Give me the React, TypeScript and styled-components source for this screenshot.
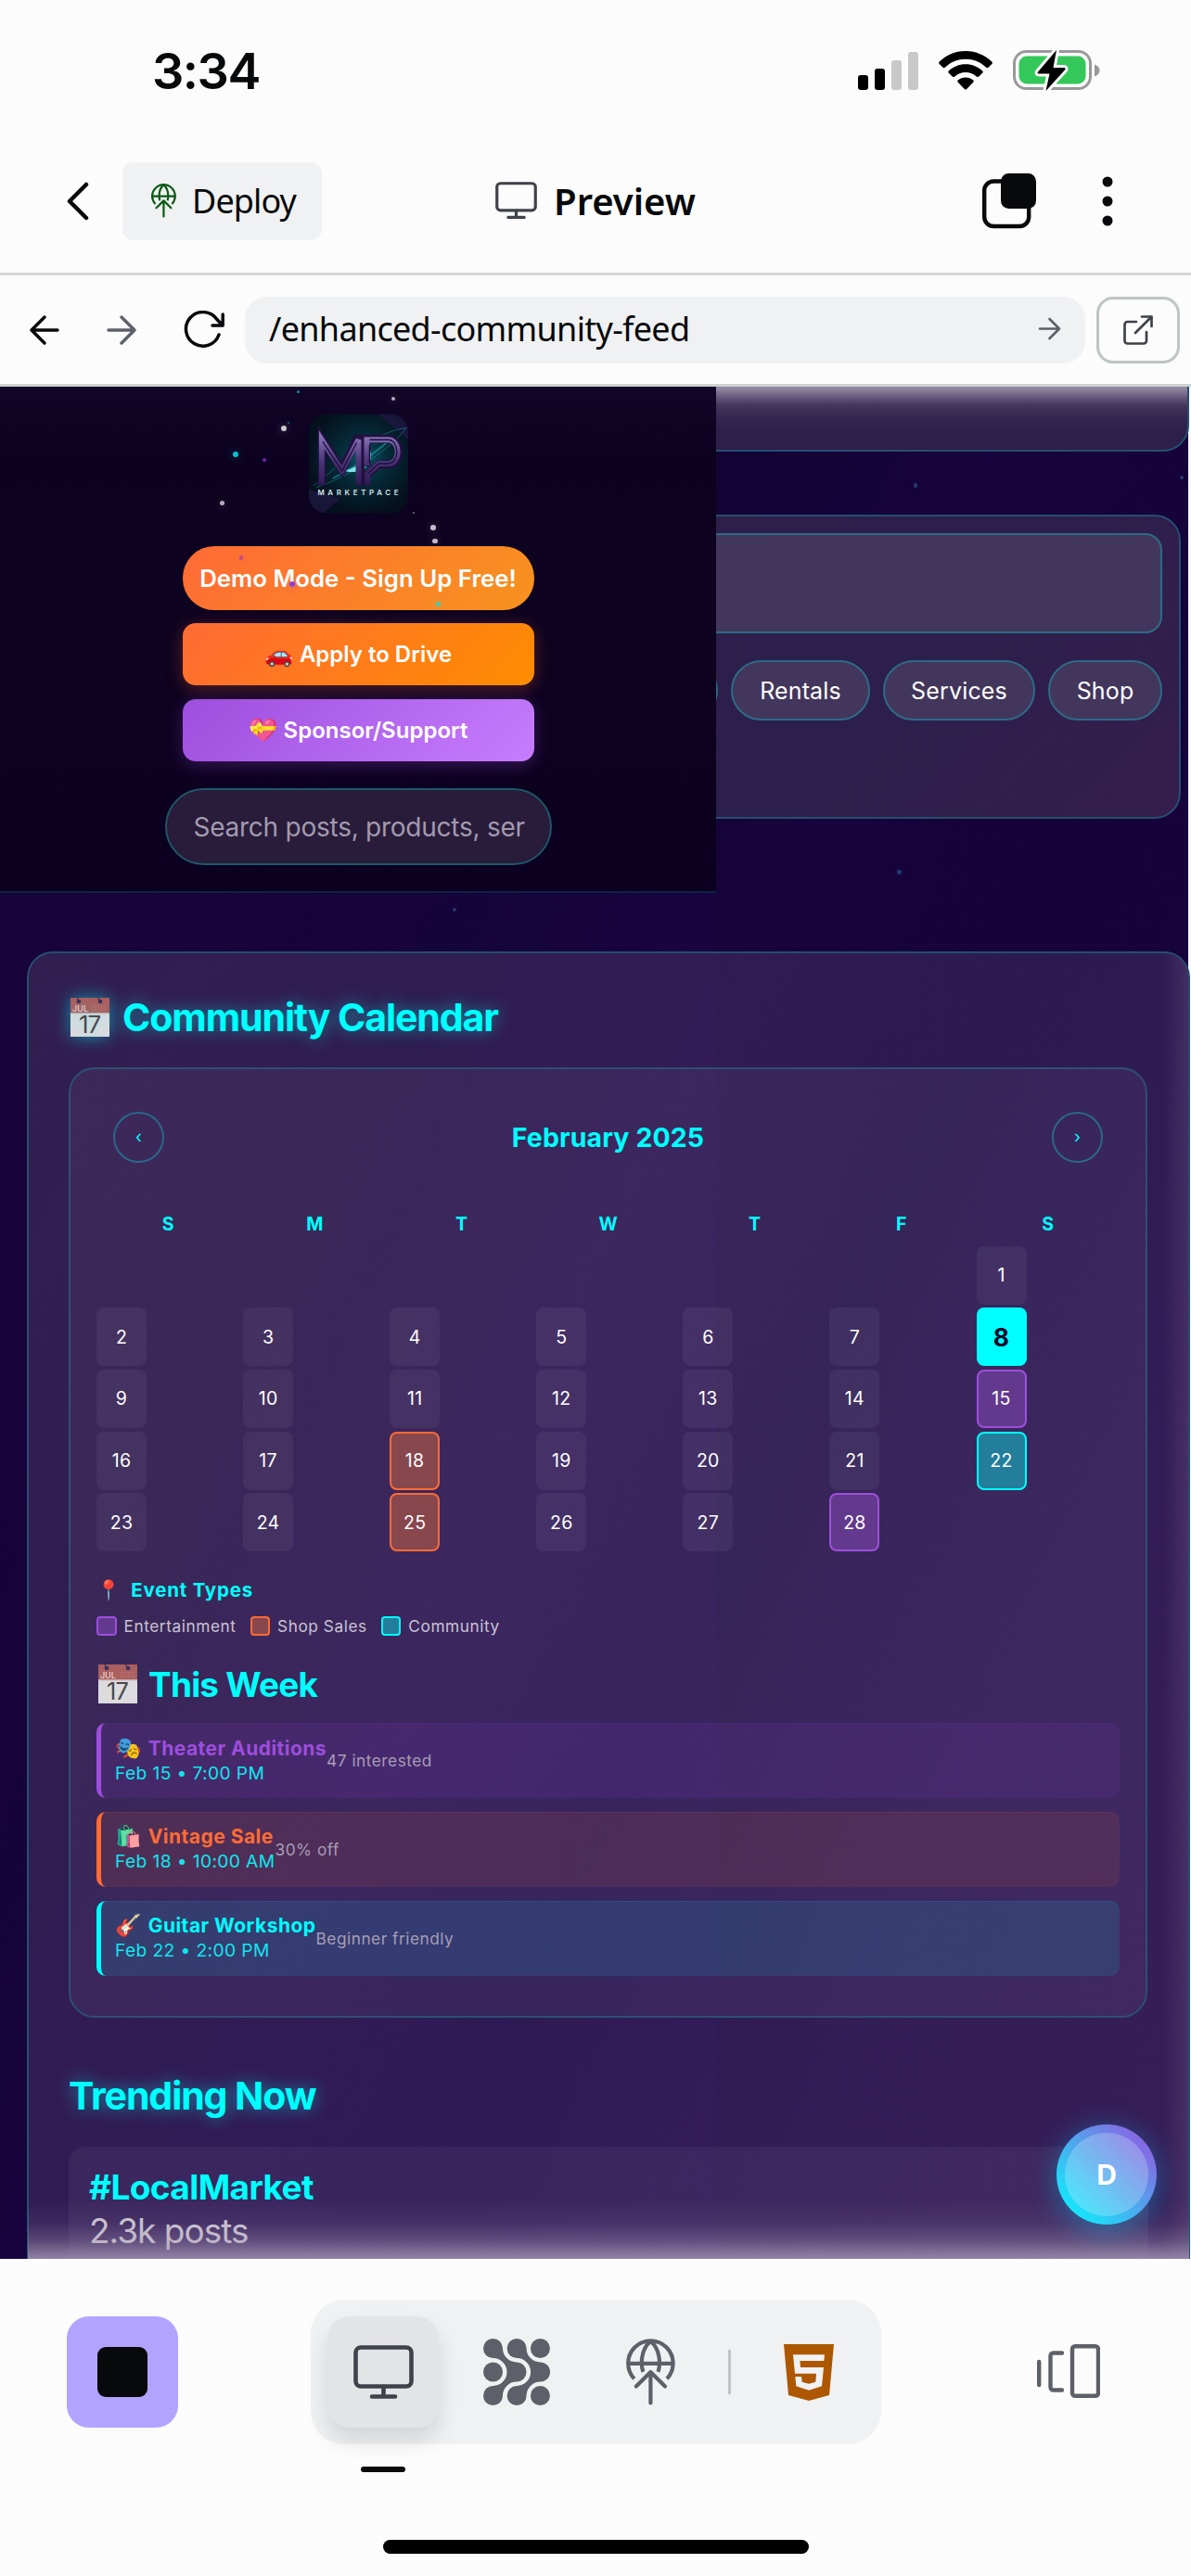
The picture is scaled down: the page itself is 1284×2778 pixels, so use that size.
import React from "react";
import styled, { createGlobalStyle, css } from "styled-components";

const Global = createGlobalStyle`
  *, *::before, *::after { box-sizing: border-box; }
  html, body { margin: 0; padding: 0; background: #fcfcfc; }
  body { font-family: Inter, "Liberation Sans", "Noto Color Emoji", sans-serif; }
`;

const Screen = styled.div`
  width: 1284px;
  height: 2778px;
  display: flex;
  flex-direction: column;
  background: #fcfcfc;
  color: #07090b;
  overflow: hidden;
`;

/* ---------- status bar ---------- */
const StatusBar = styled.header`
  height: 150px;
  flex: none;
  display: flex;
  justify-content: space-between;
  align-items: center;
  padding: 2px 98px 0 164px;
`;
const Clock = styled.span`
  font-size: 54px;
  font-weight: 600;
  letter-spacing: -1.5px;
`;
const StatusIcons = styled.div`
  display: flex;
  align-items: center;
  gap: 22px;
`;

/* ---------- app header ---------- */
const AppHeader = styled.div`
  height: 147px;
  flex: none;
  display: grid;
  grid-template-columns: 1fr auto 1fr;
  align-items: center;
  padding: 0 84px 11px 71px;
  border-bottom: 3px solid #d5d7d8;
`;
const HeaderSide = styled.div<{ $end?: boolean; $gap: number }>`
  display: flex;
  align-items: center;
  gap: ${(p) => p.$gap}px;
  justify-content: ${(p) => (p.$end ? "flex-end" : "flex-start")};
`;
const DeployButton = styled.button`
  width: 215px;
  height: 84px;
  border: 0;
  border-radius: 12px;
  background: #f0f1f3;
  color: #07090b;
  display: flex;
  align-items: center;
  gap: 17px;
  padding: 0 0 0 31px;
  font: 400 36px "Noto Sans", sans-serif;
  letter-spacing: -0.9px;
`;
const PageTitle = styled.div`
  display: flex;
  align-items: center;
  gap: 18px;
  margin-left: 13px;
  font: 600 40px "Noto Sans", sans-serif;
  letter-spacing: 0px;
`;

/* ---------- url bar ---------- */
const UrlRow = styled.div`
  height: 120px;
  flex: none;
  display: flex;
  align-items: center;
  padding: 0 12px 0 32px;
  border-bottom: 3px solid #cfd3d2;
`;
const NavIcons = styled.div`
  display: flex;
  align-items: center;
  width: 232px;
  gap: 51px;
`;
const UrlField = styled.div`
  flex: 1;
  height: 72px;
  border-radius: 24px;
  background: #f0f1f3;
  display: flex;
  align-items: center;
  justify-content: space-between;
  padding: 0 26px 2px 26px;
  font: 400 36px "Noto Sans", sans-serif;
  letter-spacing: -0.7px;
`;
const OpenButton = styled.button`
  width: 90px;
  height: 72px;
  margin-left: 12px;
  padding: 0;
  border: 3px solid #bfc4c4;
  border-radius: 18px;
  background: #fcfcfc;
  display: flex;
  align-items: center;
  justify-content: center;
`;

/* ---------- web view ---------- */
const WebView = styled.main`
  position: relative;
  height: 2019px;
  flex: none;
  overflow: hidden;
  background: #fcfcfc;
  color: #fff;
`;
const PageBody = styled.div`
  width: 1281px;
  height: 2019px;
  background:
    linear-gradient(90deg, rgba(34, 4, 84, 0.2) 0 772px, transparent 772px),
    linear-gradient(115deg, #130434 0%, #160334 22%, #120434 34%, #17043c 50%, #150339 62%, #1a0440 78%, #1b0443 100%);
`;
const Feed = styled.div`
  width: 1284px;
  padding-left: 29px;
  display: flex;
  flex-direction: column;
`;
const glass = css`
  background: linear-gradient(118deg, rgba(255, 255, 255, 0.11), rgba(255, 215, 255, 0.115) 30%, rgba(210, 190, 255, 0.12) 55%, rgba(255, 225, 245, 0.12));
  border: 2px solid #254e70;
`;
const ComposerTop = styled.section`
  ${glass}
  width: 1253px;
  height: 150px;
  margin-top: -80px;
  border-radius: 28px;
  background: linear-gradient(180deg, #8f87a0 80px, #6a5f80 88px, #43375c 98px, #33264f 112px, #2c1f4a 126px, #2c1f4a);
`;
const Composer = styled.section`
  ${glass}
  width: 1244px;
  height: 328px;
  margin-top: 68px;
  border-radius: 28px;
  padding: 18px;
  background: linear-gradient(135deg, #331f4c, #2d1f4a 40%, #2c1f4b 70%, #351e4c);
`;
const PostField = styled.div`
  height: 108px;
  border: 2px solid #2c6b86;
  border-radius: 18px;
  background: #43365c;
`;
const Filters = styled.div`
  display: flex;
  justify-content: flex-end;
  gap: 14px;
  margin-top: 29px;
`;
const Chip = styled.button<{ $w: number }>`
  width: ${(p) => p.$w}px;
  height: 65px;
  padding: 0;
  border: 2px solid #2c6b86;
  border-radius: 33px;
  background: #43365c;
  color: #fff;
  font: 400 25px Inter, sans-serif;
  letter-spacing: 0.15px;
`;
const Sidebar = styled.section`
  position: relative;
  ${glass}
  width: 1254px;
  height: 1480px;
  margin-top: 143px;
  border-radius: 28px;
  padding: 41px 43px 0;
  &::after {
    content: "";
    position: absolute;
    inset: 0;
    border-radius: 26px;
    pointer-events: none;
    background: linear-gradient(270deg, rgba(110, 90, 130, 0.3), rgba(110, 90, 130, 0) 27px);
  }
`;
const SectionTitle = styled.h2<{ $mt?: number }>`
  margin: ${(p) => p.$mt ?? 0}px 0 0;
  height: 58px;
  padding-bottom: 3px;
  font-size: 41px;
  font-weight: 700;
  letter-spacing: -1.08px;
  color: #00ffff;
  text-shadow: 0 0 18px rgba(0, 255, 255, 0.5);
  display: flex;
  align-items: center;
`;
const CalendarCard = styled.div`
  width: 1163px;
  height: 1025px;
  margin-top: 24px;
  padding: 46px 28px 0 28px;
  border: 2px solid #2d4f73;
  border-radius: 28px;
  background: rgba(255, 255, 255, 0.05);
`;
const MonthRow = styled.div`
  display: flex;
  align-items: center;
  justify-content: space-between;
  padding: 0 18px;
`;
const RoundButton = styled.button`
  width: 55px;
  height: 55px;
  padding: 0 0 2px;
  border: 2px solid #2b678a;
  border-radius: 50%;
  background: transparent;
  color: #00ffff;
  font: 400 18px Inter, sans-serif;
`;
const Month = styled.div`
  color: #00ffff;
  font-size: 28.5px;
  font-weight: 700;
  letter-spacing: 0.1px;
`;
const Grid = styled.div<{ $mt: number }>`
  display: grid;
  grid-template-columns: repeat(7, 1fr);
  gap: 3.6px;
  width: 1103px;
  margin-top: ${(p) => p.$mt}px;
`;
const Weekday = styled.div`
  text-align: center;
  height: 26px;
  line-height: 25px;
  color: #00ffff;
  font-size: 19.5px;
  font-weight: 700;
`;
type Kind = "plain" | "today" | "fun" | "sale" | "local";
const kinds = {
  plain: css`background: rgba(255, 255, 255, 0.05);`,
  today: css`background: #00ffff; color: #140a2c; font-weight: 700; font-size: 26.5px;`,
  fun: css`background: #63398e; border: 2px solid #9d4edd;`,
  sale: css`background: #88464d; border: 2px solid #ff6b35;`,
  local: css`background: #237e9c; border: 2px solid #00ffff;`,
};
const Day = styled.div<{ $kind: Kind }>`
  width: 54px;
  height: 63.1px;
  border-radius: 8px;
  display: flex;
  align-items: center;
  justify-content: center;
  font-size: 19.5px;
  letter-spacing: 0.3px;
  ${(p) => kinds[p.$kind]}
`;
const LegendTitle = styled.h4`
  margin: 27px 0 0;
  height: 28px;
  display: flex;
  align-items: center;
  color: #00ffff;
  font-size: 20.5px;
  font-weight: 700;
  letter-spacing: 0.8px;
`;
const Legend = styled.div`
  display: flex;
  margin-top: 14px;
  gap: 15px;
  height: 22px;
`;
const LegendItem = styled.div`
  display: flex;
  align-items: center;
  gap: 8px;
  color: #c9c3d3;
  font-size: 17.3px;
  letter-spacing: 0.55px;
`;
const Swatch = styled.span<{ $kind: Kind }>`
  ${(p) => kinds[p.$kind]}
  width: 21.5px;
  height: 21.5px;
  border-radius: 4px;
`;
const WeekTitle = styled.h3`
  margin: 28px 0 0;
  height: 48px;
  display: flex;
  align-items: center;
  color: #00ffff;
  font-size: 37px;
  font-weight: 700;
  letter-spacing: -0.8px;
`;
const EventRow = styled.div<{ $line: string; $bg: string }>`
  display: flex;
  align-items: center;
  width: 1103px;
  height: 81px;
  margin-bottom: 14.6px;
  padding: 0 0 0 15px;
  border-left: 5.4px solid ${(p) => p.$line};
  border-radius: 10px;
  background: ${(p) => p.$bg};
  box-shadow: inset 0 1px 0 ${(p) => p.$bg};
`;
const Events = styled.div`
  margin-top: 18px;
`;
const EventName = styled.div<{ $c: string }>`
  display: flex;
  align-items: center;
  height: 27px;
  color: ${(p) => p.$c};
  font-size: 21px;
  font-weight: 700;
  letter-spacing: 0.48px;
`;
const EventTime = styled.div`
  height: 27px;
  line-height: 27px;
  color: #0ee6ee;
  font-size: 19.3px;
  letter-spacing: 0.35px;
`;
const EventNote = styled.div`
  color: #a79db5;
  font-size: 17.3px;
  letter-spacing: 0.5px;
`;
const Trend = styled.div`
  width: 1164px;
  height: 160px;
  margin-top: 25px;
  padding: 21px 22px;
  border-radius: 18px;
  background: rgba(255, 255, 255, 0.05);
`;
const TrendTag = styled.div`
  height: 47px;
  line-height: 46px;
  color: #00ffff;
  font-size: 37px;
  font-weight: 700;
  letter-spacing: -0.6px;
`;
const TrendCount = styled.div`
  height: 46px;
  line-height: 46px;
  color: #cbc4d1;
  font-size: 37px;
  letter-spacing: -1px;
`;
const BottomHaze = styled.div`
  position: absolute;
  left: 30px;
  right: 2px;
  bottom: 0;
  height: 64px;
  background: linear-gradient(180deg, rgba(170, 155, 185, 0), rgba(170, 155, 185, 0.1) 40%, rgba(170, 155, 185, 0.35) 70%, rgba(170, 155, 185, 0.8));
`;

/* ---------- overlay menu ---------- */
const Menu = styled.nav`
  position: absolute;
  left: 0;
  top: 0;
  width: 772px;
  height: 546px;
  padding: 29px 0 0;
  display: flex;
  flex-direction: column;
  align-items: center;
  background: linear-gradient(180deg, #120528 0, #0c0220 14%, #0e0320 50%, #0c0020 100%);
  border-bottom: 2px solid #0d2446;
`;
const LogoBox = styled.div`
  height: 108px;
  margin-bottom: 35px;
`;
const Cta = styled.button<{ $bg: string; $pill?: boolean; $glow: string }>`
  width: 379px;
  height: ${(p) => (p.$pill ? 69 : 67)}px;
  margin-bottom: 14.4px;
  padding: 0;
  border: 0;
  border-radius: ${(p) => (p.$pill ? 34 : 14)}px;
  background: ${(p) => p.$bg};
  box-shadow: 0 4px 18px ${(p) => p.$glow};
  color: #fff;
  display: flex;
  align-items: center;
  justify-content: center;
  white-space: nowrap;
  font: 600 ${(p) => (p.$pill ? 25.8 : 24)}px Inter, sans-serif;
`;
const Search = styled.div`
  width: 417px;
  height: 83px;
  margin-top: 15px;
  padding: 0 29px;
  border: 2px solid #1c5868;
  border-radius: 42px;
  background: #281c3a;
  display: flex;
  align-items: center;
`;
const SearchText = styled.span`
  white-space: nowrap;
  color: #a29aae;
  font-size: 28px;
  letter-spacing: -0.25px;
`;
const Star = styled.i<{ $x: number; $y: number; $r: number; $c: string }>`
  position: absolute;
  left: ${(p) => p.$x - p.$r}px;
  top: ${(p) => p.$y - 417 - p.$r}px;
  width: ${(p) => p.$r * 2}px;
  height: ${(p) => p.$r * 2}px;
  border-radius: 50%;
  background: ${(p) => p.$c};
  box-shadow: 0 0 8px ${(p) => p.$c}66;
`;
const Fab = styled.button`
  position: absolute;
  left: 1139px;
  top: 1874px;
  width: 108px;
  height: 108px;
  padding: 9px;
  border: 0;
  border-radius: 50%;
  background: linear-gradient(45deg, #00ffff, #9d4edd);
  box-shadow: 0 6px 30px rgba(0, 200, 255, 0.4);
`;
const FabInner = styled.span`
  display: flex;
  align-items: center;
  justify-content: center;
  width: 90px;
  height: 90px;
  border-radius: 50%;
  background: rgba(255, 255, 255, 0.22);
  color: #fff;
  font: 700 30px Inter, sans-serif;
`;

/* ---------- bottom dock ---------- */
const Dock = styled.footer`
  flex: 1;
  display: grid;
  grid-template-columns: 263px 615px 1fr;
  grid-template-rows: 156px 30px 1fr;
  padding: 44px 98px 0 72px;
`;
const StopButton = styled.button`
  width: 120px;
  height: 120px;
  padding: 0;
  align-self: center;
  border: 0;
  border-radius: 24px;
  background: #b2a3ff;
  display: flex;
  align-items: center;
  justify-content: center;
`;
const StopMark = styled.span`
  width: 54px;
  height: 54px;
  border-radius: 9px;
  background: #07090b;
`;
const TabGroup = styled.div`
  height: 156px;
  border-radius: 36px;
  background: #f0f1f3;
  display: grid;
  grid-template-columns: 120px 168px 120px 50px 1fr;
  align-items: center;
  justify-items: center;
  padding: 0 18px 0 18px;
`;
const ActiveTab = styled.div`
  width: 120px;
  height: 120px;
  border-radius: 24px;
  background: #e3e4e6;
  box-shadow: 0 14px 24px rgba(0, 0, 0, 0.12);
  display: flex;
  align-items: center;
  justify-content: center;
`;
const TabDivider = styled.span`
  width: 3px;
  height: 48px;
  background: #c2c3c5;
`;
const Aside = styled.div`
  justify-self: end;
  align-self: center;
  height: 60px;
`;
const Indicator = styled.span`
  grid-row: 2;
  grid-column: 2;
  width: 48px;
  height: 6px;
  margin: 24px 0 0 54px;
  border-radius: 3px;
  background: #07090b;
`;
const HomeBar = styled.span`
  grid-row: 3;
  grid-column: 1 / -1;
  width: 459px;
  height: 15px;
  margin: 73px 0 0 341px;
  border-radius: 8px;
  background: #000;
`;

/* ---------- icons ---------- */
const Signal = () => (
  <svg width="65" height="41" viewBox="0 0 65 41">
    <rect x="0" y="25" width="11" height="16" rx="3" />
    <rect x="18" y="18" width="11" height="23" rx="3" />
    <rect x="36" y="9" width="11" height="32" rx="3" fill="#c8c8c8" />
    <rect x="54" y="0" width="11" height="41" rx="3" fill="#c8c8c8" />
  </svg>
);
const Wifi = () => (
  <svg width="58" height="42" viewBox="0 0 58 42">
    <path d="M29 0C40 0 50 4.500 57.300 11.500C58 12.200 58 13.200 57.300 13.900L53.500 17.700C52.900 18.300 51.900 18.300 51.200 17.700C45 12 37.500 8.800 29 8.800S13 12 6.800 17.700C6.100 18.300 5.100 18.300 4.500 17.700L.7 13.900C0 13.200 0 12.200.7 11.500C8 4.500 18 0 29 0Z" />
    <path d="M29 14.300C36 14.300 42.400 17 47.200 21.400C47.900 22.100 47.900 23.100 47.200 23.800L43.300 27.600C42.700 28.200 41.700 28.200 41 27.700C37.800 24.800 33.600 23.100 29 23.100S20.200 24.800 17 27.700C16.300 28.200 15.300 28.200 14.700 27.600L10.800 23.800C10.100 23.100 10.100 22.100 10.800 21.400C15.600 17 22 14.300 29 14.300Z" />
    <path d="M29 28.500C32.200 28.500 35 29.600 37.200 31.500C37.900 32.100 37.900 33.100 37.200 33.800L30.200 40.900C29.500 41.600 28.500 41.600 27.800 40.900L20.800 33.800C20.100 33.100 20.100 32.100 20.800 31.500C23 29.600 25.800 28.500 29 28.500Z" />
  </svg>
);
const Battery = () => (
  <svg width="94" height="46" viewBox="0 0 94 46">
    <rect x="1.500" y="2.500" width="82" height="40" rx="13" fill="none" stroke="#999" strokeWidth="3" />
    <path d="M88 16.500c3.800 1.300 5.500 3.600 5.500 6.500s-1.700 5.200-5.500 6.500z" fill="#999" />
    <rect x="6.500" y="7.500" width="72" height="30" rx="8.500" fill="#34c759" />
    <path d="M47 1L27 24.500c-.8 1-.3 2 1 2h11.500L35.500 45L56 22.500c1-1.200.5-2.500-1-2.500H43.500z" stroke="#fcfcfc" strokeWidth="6" strokeLinejoin="round" />
    <path d="M47 1L27 24.500c-.8 1-.3 2 1 2h11.500L35.500 45L56 22.500c1-1.200.5-2.500-1-2.500H43.500z" />
  </svg>
);
const GlobeUp = ({ w, c, s = 4.2 }: { w: number; c: string; s?: number }) => (
  <svg width={w} height={(w * 72) / 53} viewBox="0 0 53 72" fill="none" stroke={c} strokeWidth={s} strokeLinecap="round" strokeLinejoin="round">
    <path strokeLinecap="butt" d="M8.800 43.200A24.200 24.200 0 1 1 44 43.200" />
    <path strokeLinecap="butt" d="M2.500 26.800H50.300M26.400 2.800C20 8 16.800 17 16.800 26.700C16.800 30 17.200 33 18.400 35.800M26.400 2.800C32.800 8 36 17 36 26.700C36 30 35.600 33 34.400 35.800" />
    <path d="M26.400 36V69.500M10.800 51.400L26.400 36L42 51.400" />
  </svg>
);
const Monitor = ({ w, c, s }: { w: number; c: string; s: number }) => (
  <svg width={w} height={(w * 58) / 65} viewBox="0 0 65 58" fill="none" stroke={c} strokeWidth={s} strokeLinecap="round">
    <rect x="2.500" y="2.500" width="60" height="42" rx="5.500" />
    <path d="M32.500 45V55M20 55.500H45" />
  </svg>
);
const Arrow = ({ w, h, c, s, left }: { w: number; h: number; c: string; s: number; left?: boolean }) => (
  <svg width={w} height={h} viewBox={`0 0 ${w} ${h}`} fill="none" stroke={c} strokeWidth={s} strokeLinecap="round" strokeLinejoin="round">
    {left ? (
      <path d={`M${w - 2} ${h / 2}H2M${h / 2} 2L2 ${h / 2}L${h / 2} ${h - 2}`} />
    ) : (
      <path d={`M2 ${h / 2}H${w - 2}M${w - h / 2} 2L${w - 2} ${h / 2}L${w - h / 2} ${h - 2}`} />
    )}
  </svg>
);
const Dots = () => (
  <svg width="72" height="72" viewBox="0 0 72 72" fill="#5e6069">
    <circle cx="61.400" cy="10.500" r="10.500" />
    <circle cx="10.500" cy="36" r="10.500" />
    <circle cx="61.400" cy="61.500" r="10.500" />
    {[0, 25.6].map((x) => (
      <path
        key={x}
        transform={`translate(${x} 0)`}
        d="M10.500 0A10.500 10.500 0 0 1 21 10.500A15 15 0 0 0 36 25.500A10.500 10.500 0 0 1 36 46.500A15 15 0 0 0 21 61.500A10.500 10.500 0 1 1 10.500 51A15 15 0 0 0 10.500 21A10.500 10.500 0 0 1 10.500 0Z"
      />
    ))}
  </svg>
);
const Html5 = () => (
  <svg width="54" height="61" viewBox="0 0 162 183">
    <path fill="#ad5700" d="M0 0H162L147 165L81 183L15 165Z" />
    <path fill="#f0f1f3" d="M30 34H132L130 54H52L54 75H129L123 136L81 149L40 136L37 105H57L59 122L81 128L103 122L105 95H36Z" />
  </svg>
);
const CalendarSvg = styled.svg<{ $glow?: boolean }>`
  margin: 0 ${(p) => (p.$glow ? 14 : 12)}px 0 2px;
  overflow: visible;
  box-shadow: ${(p) => (p.$glow ? "0 0 18px rgba(0, 255, 255, 0.5)" : "none")};
`;
const CalendarIcon = ({ glow }: { glow?: boolean }) => (
  <CalendarSvg $glow={glow} width="42" height="42" viewBox="0 0 42 42">
    <rect width="42" height="42" fill="#dcdbde" />
    <rect width="42" height="16.500" fill="#ab5f5e" />
    <rect x="0" y="16.500" width="42" height="1" fill="#c9b9bd" />
    <circle cx="9" cy="4" r="2.300" fill="#3a2f63" />
    <circle cx="32" cy="4" r="2.300" fill="#3a2f63" />
    <path d="M9 4L7 0M32 4L29.500 0" stroke="#3a2f63" strokeWidth="1.200" />
    <text x="2" y="14.500" fontFamily="Inter, sans-serif" fontSize="9" fontWeight="500" fill="#e8d5d6" textLength="16">JUL</text>
    <path d="M23 8.500H39M23 11H39M23 13.500H39" stroke="#b97473" strokeWidth="1" strokeDasharray="2 1" />
    <text x="20.500" y="37.500" fontFamily="Inter, sans-serif" fontSize="25" fontWeight="400" fill="#4a4a4c" textAnchor="middle" textLength="23" lengthAdjust="spacingAndGlyphs">17</text>
  </CalendarSvg>
);
const Logo = () => (
  <svg width="107" height="108" viewBox="0 0 108 108">
    <defs>
      <radialGradient id="lg" cx=".55" cy=".45" r=".55">
        <stop offset="0" stopColor="#0a5566" />
        <stop offset=".45" stopColor="#052a38" />
        <stop offset="1" stopColor="#05101d" />
      </radialGradient>
      <linearGradient id="mp" gradientUnits="userSpaceOnUse" x1="0" y1="24" x2="0" y2="78">
        <stop offset="0" stopColor="#8672b4" />
        <stop offset=".5" stopColor="#4a3579" />
        <stop offset="1" stopColor="#2d1b52" />
      </linearGradient>
      <clipPath id="lc"><rect width="108" height="108" rx="19" /></clipPath>
    </defs>
    <g clipPath="url(#lc)">
      <rect width="108" height="108" fill="url(#lg)" />
      <path d="M76 0H108V28Z" fill="#2a1a50" opacity=".55" />
      <path d="M0 82V108H16L34 92Z" fill="#2a1a50" opacity=".55" />
      <path d="M5 78C30 60 66 20 106 15C92 34 50 66 8 80" fill="none" stroke="#17a0ac" strokeWidth="1" opacity=".5" />
      <path d="M26 70C46 60 74 42 90 26" stroke="#1cc3cb" strokeWidth="2" fill="none" opacity=".45" />
      <path d="M40 62C46 58 64 56 66 38C72 50 62 64 44 63Z" fill="#7fe3ea" />
      <g fill="none" stroke="#221040" strokeWidth="9">
        <path d="M14 78V27L36 61L52 27H56V78" />
        <path d="M62.500 57V27H86C102 27 102 55 86 55H76L62.500 67V78" />
      </g>
      <g fill="none" stroke="url(#mp)" strokeWidth="6">
        <path d="M14 77V28L36 62L54 28V77" />
        <path d="M63 56V28H86C100 28 100 54 86 54H76L64 65V77" />
      </g>
      <path d="M15 30L36 62L52 31M66 34V54M66 28H86C99 28 99 54 86 54H76L64 65" fill="none" stroke="#1d0f38" strokeWidth="1.300" />
    </g>
    <text x="9.500" y="88" fill="#d5e4e8" fontFamily="Inter, sans-serif" fontSize="8" fontWeight="600" textLength="88">MARKETPACE</text>
  </svg>
);

const stars: [number, number, number, string][] = [
  [321, 422, 1.5, "#1a8a96"], [424, 430, 2, "#b5aebe"], [306, 462, 3, "#cdc8d2"], [311, 456, 1.2, "#14707c"],
  [254, 490, 3, "#0bc0cc"], [284.5, 496, 2, "#6a28a8"], [239, 542.5, 2.5, "#b5aebe"], [467, 569, 2.7, "#c2bcca"],
  [469, 583.5, 2.7, "#c2bcca"], [260, 601.5, 2.2, "#c44a80"], [315, 629.5, 3, "#8c3fd0"], [472.5, 651, 2.5, "#3ccfb4"],
  [446, 553, 0.8, "#6a6478"], [987, 523.6, 2.3, "#233a70"], [1274, 515, 2.3, "#233a70"], [969.7, 940.4, 2.3, "#233a70"], [489.5, 981, 2, "#233a70"],
];

const kindOf = (d: number): Kind =>
  d === 8 ? "today" : d === 15 || d === 28 ? "fun" : d === 18 || d === 25 ? "sale" : d === 22 ? "local" : "plain";

const events = [
  { icon: "🎭", name: "Theater Auditions", time: "Feb 15 • 7:00 PM", note: "47 interested", c: "#9d4edd", bg: "rgba(112,48,170,0.2)" },
  { icon: "🛍️", name: "Vintage Sale", time: "Feb 18 • 10:00 AM", note: "30% off", c: "#ff6b35", bg: "rgba(255,107,53,0.1)" },
  { icon: "🎸", name: "Guitar Workshop", time: "Feb 22 • 2:00 PM", note: "Beginner friendly", c: "#00ffff", bg: "rgba(30,150,190,0.2)" },
];

const Emoji = styled.span<{ $s: number; $gap: number }>`
  font-size: ${(p) => p.$s}px;
  margin-right: ${(p) => p.$gap}px;
  letter-spacing: 0;
  line-height: 1;
`;

export default function App() {
  return (
    <Screen>
      <Global />
      <StatusBar>
        <Clock>3:34</Clock>
        <StatusIcons><Signal /><Wifi /><Battery /></StatusIcons>
      </StatusBar>

      <AppHeader>
        <HeaderSide $gap={36}>
          <svg width="25" height="42" viewBox="0 0 25 42" fill="none" stroke="#07090b" strokeWidth="4.500" strokeLinecap="round" strokeLinejoin="round"><path d="M22 3L4 21L22 39" /></svg>
          <DeployButton><GlobeUp w={27} c="#0b5a14" s={4.4} />Deploy</DeployButton>
        </HeaderSide>
        <PageTitle><Monitor w={45} c="#3f424a" s={4.6} />Preview</PageTitle>
        <HeaderSide $end $gap={71}>
          <svg width="58" height="60" viewBox="0 0 58 60">
            <rect x="2.200" y="8.500" width="48" height="48.500" rx="10" fill="none" stroke="#07090b" strokeWidth="4.400" />
            <rect x="20" y="0" width="38" height="38" rx="8.500" fill="#07090b" />
          </svg>
          <svg width="12" height="54" viewBox="0 0 12 54" fill="#07090b"><circle cx="6" cy="6" r="5.500" /><circle cx="6" cy="27" r="5.500" /><circle cx="6" cy="48" r="5.500" /></svg>
        </HeaderSide>
      </AppHeader>

      <UrlRow>
        <NavIcons>
          <Arrow left w={32} h={32} c="#07090b" s={3.4} />
          <Arrow w={32} h={32} c="#5e6069" s={3.4} />
          <svg width="44" height="41" viewBox="0 0 44 41" fill="none" stroke="#07090b" strokeWidth="3.500" strokeLinecap="round" strokeLinejoin="round">
            <path d="M38 26A18.300 18.300 0 1 1 35.500 9L42 16M42.200 4V16H31" />
          </svg>
        </NavIcons>
        <UrlField>/enhanced-community-feed<Arrow w={25} h={25} c="#5e6069" s={2.6} /></UrlField>
        <OpenButton>
          <svg width="32" height="32" viewBox="0 0 32 32" fill="none" stroke="#3f424a" strokeWidth="2.700" strokeLinecap="round" strokeLinejoin="round">
            <path d="M14 7H4.500A3 3 0 0 0 1.500 10V27.500A3 3 0 0 0 4.500 30.500H22A3 3 0 0 0 25 27.500V18M20 1.500H30.500V12M30.500 1.500L13 19" />
          </svg>
        </OpenButton>
      </UrlRow>

      <WebView>
        <PageBody>
          <Feed>
            <ComposerTop />
            <Composer>
              <PostField />
              <Filters>
                <Chip $w={150} aria-label="All" />
                <Chip $w={150}>Rentals</Chip>
                <Chip $w={164}>Services</Chip>
                <Chip $w={123}>Shop</Chip>
              </Filters>
            </Composer>
            <Sidebar>
              <SectionTitle><CalendarIcon glow />Community Calendar</SectionTitle>
              <CalendarCard>
                <MonthRow><RoundButton>‹</RoundButton><Month>February 2025</Month><RoundButton>›</RoundButton></MonthRow>
                <Grid $mt={54}>
                  {"SMTWTFS".split("").map((d, i) => <Weekday key={i}>{d}</Weekday>)}
                </Grid>
                <Grid $mt={9.5}>
                  {Array.from({ length: 6 }, (_, i) => <span key={i} />)}
                  {Array.from({ length: 28 }, (_, i) => <Day key={`d${i}`} $kind={kindOf(i + 1)}>{i + 1}</Day>)}
                </Grid>
                <LegendTitle><Emoji $s={21} $gap={11}>📍</Emoji>Event Types</LegendTitle>
                <Legend>
                  <LegendItem><Swatch $kind="fun" />Entertainment</LegendItem>
                  <LegendItem><Swatch $kind="sale" />Shop Sales</LegendItem>
                  <LegendItem><Swatch $kind="local" />Community</LegendItem>
                </Legend>
                <WeekTitle><CalendarIcon />This Week</WeekTitle>
                <Events>
                  {events.map((e) => (
                    <EventRow key={e.name} $line={e.c} $bg={e.bg}>
                      <div>
                        <EventName $c={e.c}><Emoji $s={23} $gap={7}>{e.icon}</Emoji>{e.name}</EventName>
                        <EventTime>{e.time}</EventTime>
                      </div>
                      <EventNote>{e.note}</EventNote>
                    </EventRow>
                  ))}
                </Events>
              </CalendarCard>
              <SectionTitle $mt={56}>Trending Now</SectionTitle>
              <Trend>
                <TrendTag>#LocalMarket</TrendTag>
                <TrendCount>2.3k posts</TrendCount>
              </Trend>
            </Sidebar>
          </Feed>
        </PageBody>
        <BottomHaze />
        <Menu>
          <LogoBox><Logo /></LogoBox>
          <Cta $pill $bg="linear-gradient(135deg,#ff6b35,#f7931e)" $glow="transparent">Demo Mode - Sign Up Free!</Cta>
          <Cta $bg="linear-gradient(135deg,#ff6b35,#ff8c00)" $glow="rgba(255,107,53,.3)"><Emoji $s={25} $gap={7}>🚗</Emoji>Apply to Drive</Cta>
          <Cta $bg="linear-gradient(135deg,#9d4edd,#c77dff)" $glow="rgba(157,78,221,.3)"><Emoji $s={25} $gap={7}>💝</Emoji>Sponsor/Support</Cta>
          <Search><SearchText>Search posts, products, ser</SearchText></Search>
        </Menu>
        {stars.map(([x, y, r, c], i) => <Star key={i} $x={x} $y={y} $r={r} $c={c} />)}
        <Fab><FabInner>D</FabInner></Fab>
      </WebView>

      <Dock>
        <StopButton><StopMark /></StopButton>
        <TabGroup>
          <ActiveTab><Monitor w={65} c="#3f424a" s={4.6} /></ActiveTab>
          <Dots />
          <GlobeUp w={53} c="#5e6069" />
          <TabDivider />
          <Html5 />
        </TabGroup>
        <Aside>
          <svg width="68" height="58" viewBox="0 0 68 58" fill="none" stroke="#5e6069" strokeWidth="4.400" strokeLinecap="round">
            <rect x="38" y="2.200" width="28" height="53.600" rx="3" />
            <path d="M27 9.500H17.500A3 3 0 0 0 14.500 12.500V46.500A3 3 0 0 0 17.500 49.500H27M2.200 19V44" />
          </svg>
        </Aside>
        <Indicator />
        <HomeBar />
      </Dock>
    </Screen>
  );
}
